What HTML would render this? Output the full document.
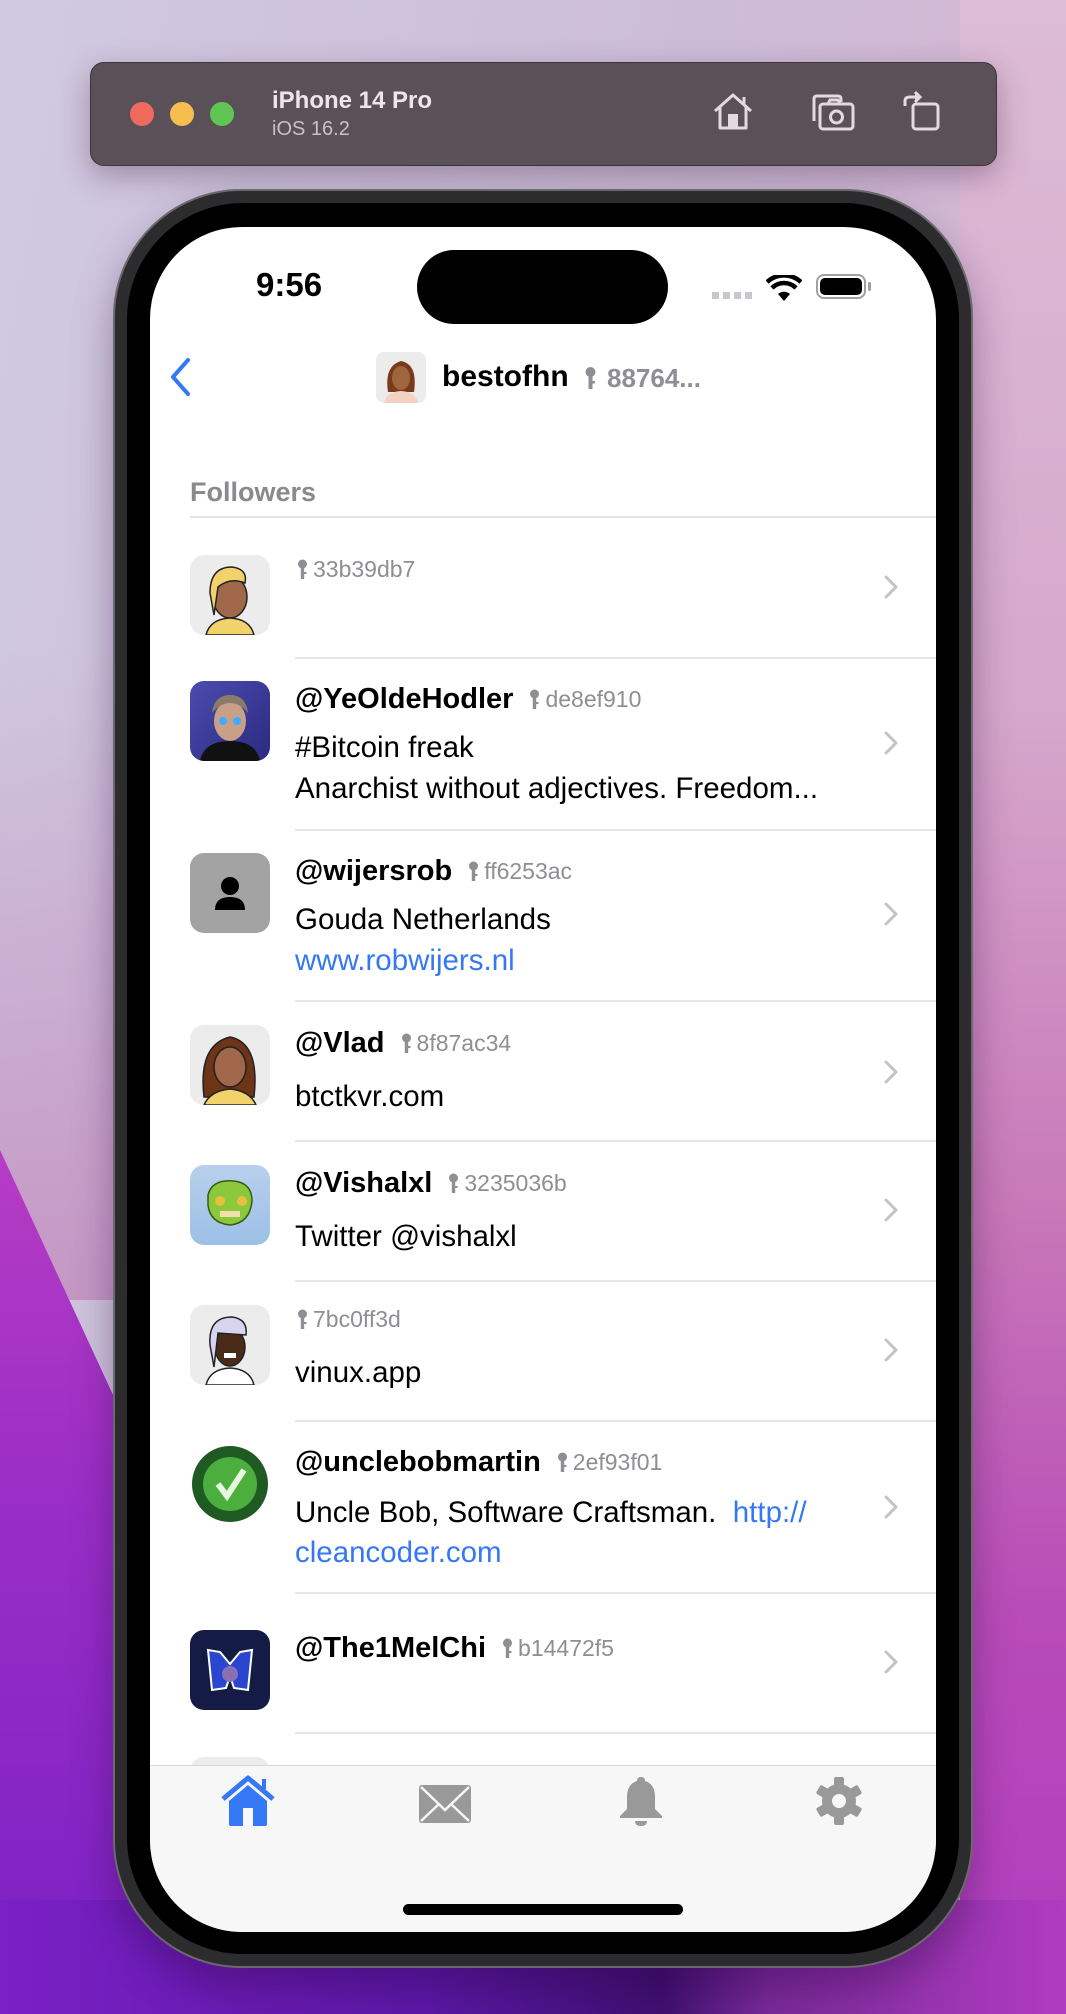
<!DOCTYPE html>
<html><head><meta charset="utf-8">
<style>
*{margin:0;padding:0;box-sizing:border-box}
html,body{width:1066px;height:2014px;overflow:hidden}
body{position:relative;font-family:"Liberation Sans",sans-serif;
background:linear-gradient(100deg,#d0cae0 0%,#cdbcd8 50%,#d8b4cc 100%);}
.abs{position:absolute}
.toolbar{left:90px;top:62px;width:907px;height:104px;border-radius:14px;background:#595058;box-shadow:0 10px 30px rgba(60,30,60,.35);border:1px solid #3c353b}
.dot{position:absolute;top:102px;width:24px;height:24px;border-radius:50%}
.phone{left:113px;top:189px;width:860px;height:1779px;border-radius:128px;background:#2c2c2e;border:2px solid #6a6a6c;box-shadow:0 20px 40px rgba(40,0,60,.35)}
.bezel{left:127px;top:203px;width:832px;height:1751px;border-radius:116px;background:#000}
.screen{left:150px;top:227px;width:786px;height:1705px;border-radius:92px;background:#fff;overflow:hidden}
.t{position:absolute;white-space:nowrap;line-height:40px;height:40px}
.hd{position:absolute;left:145px;height:40px;display:flex;align-items:center;white-space:nowrap}
.name{font-weight:bold;font-size:29px;color:#000;margin-right:16px}
.hash{font-size:23px;color:#8e8e93;margin-left:5px}
.body{font-size:29.5px;color:#000}
.link{font-size:29.5px;color:#3478f6}
.sep{position:absolute;left:145px;width:660px;height:2px;background:#e6e6ea}
.av{position:absolute;left:40px;width:80px;height:80px;border-radius:14px;overflow:hidden}
.chev{position:absolute;left:733px;width:16px;height:26px}
</style></head><body>
<div class="abs" style="left:0;top:0;width:1066px;height:1300px;background:linear-gradient(180deg,rgba(255,255,255,0) 0%,rgba(200,150,190,0) 50%,rgba(190,120,180,.6) 100%)"></div>
<div class="abs" style="left:960px;top:0;width:106px;height:2014px;background:linear-gradient(180deg,#dcbcd6 0%,#d6a8cc 35%,#c878b8 60%,#b84cb8 80%,#b03cc0 100%)"></div>
<div class="abs" style="left:0;top:1150px;width:200px;height:864px;background:linear-gradient(180deg,#b63cc4 0%,#9a2ec6 40%,#7a20c4 100%);clip-path:polygon(0 0,120px 260px,200px 260px,200px 100%,0 100%)"></div>
<div class="abs" style="left:0;top:1900px;width:1066px;height:114px;background:linear-gradient(90deg,#7a20c4 0%,#5c18a8 40%,#3e1070 62%,#7a2a9a 72%,#b03cc0 100%)"></div>

<div class="abs toolbar"></div>
<div class="dot" style="left:130px;background:#ee6a5f"></div>
<div class="dot" style="left:170px;background:#f5be4f"></div>
<div class="dot" style="left:210px;background:#61c554"></div>
<div class="abs" style="left:272px;top:86px;font-size:24px;font-weight:bold;color:#ece6ea;line-height:30px">iPhone 14 Pro</div>
<div class="abs" style="left:272px;top:117px;font-size:20px;color:#c9c1c8;line-height:24px">iOS 16.2</div>
<svg class="abs" style="left:712px;top:92px" width="42" height="38" viewBox="0 0 42 38" fill="none" stroke="#e2dadf" stroke-width="3" stroke-linejoin="round"><path d="M3 19 L21 3 L39 19"/><path d="M32 13 V5"/><path d="M8 15 V36 H34 V15"/><rect x="16" y="22" width="10" height="14" fill="#e2dadf" stroke="none"/></svg>
<svg class="abs" style="left:810px;top:93px" width="46" height="38" viewBox="0 0 46 38" fill="none" stroke="#e2dadf" stroke-width="3"><path d="M4 28 V6 Q4 3 7 3 H28 Q31 3 31 6 V9"/><rect x="10" y="11" width="33" height="25" rx="3"/><circle cx="26.5" cy="24" r="6"/><path d="M18 11 L20 7 H28 L30 11"/></svg>
<svg class="abs" style="left:902px;top:89px" width="40" height="42" viewBox="0 0 40 42" fill="none" stroke="#e2dadf" stroke-width="3"><rect x="11" y="15" width="25" height="25" rx="3"/><path d="M3 17 V12 Q3 8 8 8 H16"/><path d="M13 3 L18 8 L13 13" fill="#e2dadf"/></svg>

<div class="abs phone"></div>
<div class="abs bezel"></div>
<div class="abs screen">
  <div class="abs" style="left:267px;top:23px;width:251px;height:74px;border-radius:37px;background:#000"></div>
  <div class="abs" style="left:106px;top:38px;font-size:33px;font-weight:bold;line-height:40px;color:#000">9:56</div>
  <div class="abs" style="left:562px;top:65px;width:40px;height:7px;background:repeating-linear-gradient(90deg,#c7c7cc 0 7px,transparent 7px 11px)"></div>
  <svg class="abs" style="left:616px;top:48px" width="36" height="26" viewBox="0 0 36 26"><path d="M18 26 L12 19 A9 9 0 0 1 24 19 Z" fill="#000"/><path d="M6 13 A17 17 0 0 1 30 13" stroke="#000" stroke-width="4.5" fill="none"/><path d="M1 7 A25 25 0 0 1 35 7" stroke="#000" stroke-width="4.5" fill="none"/></svg>
  <div class="abs" style="left:666px;top:47px;width:50px;height:25px;border:2.5px solid #a0a0a0;border-radius:8px;padding:2px"><div style="width:100%;height:100%;background:#000;border-radius:5px"></div></div>
  <div class="abs" style="left:718px;top:55px;width:3px;height:9px;background:#a0a0a0;border-radius:2px"></div>

  <svg class="abs" style="left:18px;top:130px" width="24" height="40" viewBox="0 0 24 40"><path d="M20 3 L5 20 L20 37" stroke="#3478f6" stroke-width="4" fill="none" stroke-linecap="round" stroke-linejoin="round"/></svg>
  <div class="abs" style="left:226px;top:125px;width:50px;height:51px;border-radius:8px;background:#ececec;overflow:hidden">
    <svg width="50" height="51" viewBox="0 0 50 51"><path d="M12 40 Q8 14 25 9 Q42 12 38 40 Z" fill="#7a3a1c"/><ellipse cx="25" cy="26" rx="9" ry="12" fill="#a0643f"/><path d="M8 51 Q10 40 25 39 Q40 40 42 51 Z" fill="#f3d2c4"/></svg>
  </div>
  <div class="abs" style="left:292px;top:130px;font-size:30px;font-weight:bold;line-height:40px;color:#000">bestofhn</div>
  <svg class="abs" style="left:434px;top:139px" width="13" height="24" viewBox="0 0 13 24"><circle cx="6.5" cy="6" r="5" fill="#8e8e93"/><rect x="4.5" y="8" width="4" height="15" fill="#8e8e93"/><rect x="8" y="15" width="3" height="2.5" fill="#8e8e93"/></svg>
  <div class="abs" style="left:457px;top:131px;font-size:26px;font-weight:bold;line-height:40px;color:#8e8e93">88764...</div>

  <div class="abs" style="left:40px;top:245px;font-size:27px;line-height:40px;color:#8a8a8e;font-weight:bold">Followers</div>
  <div class="abs" style="left:40px;top:289px;width:746px;height:2px;background:#e3e3e6"></div>

  <!-- row1 -->
  <div class="av" style="top:328px;background:#ececec"><svg width="80" height="80" viewBox="0 0 80 80"><ellipse cx="40" cy="42" rx="17" ry="21" fill="#a0674a" stroke="#222" stroke-width="1.5"/><path d="M20 38 Q20 12 42 12 Q58 14 55 28 Q40 22 28 32 L24 60 Z" fill="#f2d26a" stroke="#222" stroke-width="1.5"/><path d="M16 80 Q20 64 40 63 Q60 64 64 80 Z" fill="#f2d26a" stroke="#222" stroke-width="1.5"/></svg></div>
  <div class="hd" style="top:322px;left:147px"><svg width="11" height="21" viewBox="0 0 11 21"><circle cx="5.5" cy="5" r="4.5" fill="#8e8e93"/><rect x="3.8" y="7" width="3.4" height="13" fill="#8e8e93"/><rect x="7" y="13" width="2.5" height="2" fill="#8e8e93"/></svg><span class="hash">33b39db7</span></div>
  <div class="sep" style="top:430px"></div>

  <!-- row2 -->
  <div class="av" style="top:454px;background:linear-gradient(135deg,#4c4cb0,#2a2a80)"><svg width="80" height="80" viewBox="0 0 80 80"><ellipse cx="40" cy="40" rx="16" ry="20" fill="#c8a088"/><path d="M22 32 Q24 14 40 14 Q56 14 58 32 Q50 22 40 22 Q30 22 22 32Z" fill="#8a7a6a"/><path d="M10 80 Q14 60 40 60 Q66 60 70 80Z" fill="#111"/><circle cx="33" cy="40" r="4" fill="#4af"/><circle cx="47" cy="40" r="4" fill="#4af"/></svg></div>
  <div class="hd" style="top:452px"><span class="name">@YeOldeHodler</span><svg width="11" height="21" viewBox="0 0 11 21"><circle cx="5.5" cy="5" r="4.5" fill="#8e8e93"/><rect x="3.8" y="7" width="3.4" height="13" fill="#8e8e93"/><rect x="7" y="13" width="2.5" height="2" fill="#8e8e93"/></svg><span class="hash">de8ef910</span></div>
  <div class="t body" style="left:145px;top:501px">#Bitcoin freak</div>
  <div class="t body" style="left:145px;top:542px">Anarchist without adjectives. Freedom...</div>
  <div class="sep" style="top:602px"></div>

  <!-- row3 -->
  <div class="av" style="top:626px;background:#a3a3a3"><svg width="80" height="80" viewBox="0 0 80 80"><circle cx="40" cy="33" r="9" fill="#000"/><path d="M25 57 Q25 44 40 44 Q55 44 55 57 Z" fill="#000"/></svg></div>
  <div class="hd" style="top:624px"><span class="name">@wijersrob</span><svg width="11" height="21" viewBox="0 0 11 21"><circle cx="5.5" cy="5" r="4.5" fill="#8e8e93"/><rect x="3.8" y="7" width="3.4" height="13" fill="#8e8e93"/><rect x="7" y="13" width="2.5" height="2" fill="#8e8e93"/></svg><span class="hash">ff6253ac</span></div>
  <div class="t body" style="left:145px;top:673px">Gouda Netherlands</div>
  <div class="t link" style="left:145px;top:714px">www.robwijers.nl</div>
  <div class="sep" style="top:773px"></div>

  <!-- row4 -->
  <div class="av" style="top:798px;background:#ececec"><svg width="80" height="80" viewBox="0 0 80 80"><path d="M14 72 Q8 20 40 12 Q70 18 64 72 Z" fill="#6e3418" stroke="#222" stroke-width="1.5"/><ellipse cx="40" cy="42" rx="16" ry="20" fill="#a0674a" stroke="#222" stroke-width="1.5"/><path d="M14 80 Q20 66 40 64 Q60 66 66 80 Z" fill="#f2d26a" stroke="#222" stroke-width="1.5"/></svg></div>
  <div class="hd" style="top:796px"><span class="name">@Vlad</span><svg width="11" height="21" viewBox="0 0 11 21"><circle cx="5.5" cy="5" r="4.5" fill="#8e8e93"/><rect x="3.8" y="7" width="3.4" height="13" fill="#8e8e93"/><rect x="7" y="13" width="2.5" height="2" fill="#8e8e93"/></svg><span class="hash">8f87ac34</span></div>
  <div class="t body" style="left:145px;top:850px">btctkvr.com</div>
  <div class="sep" style="top:913px"></div>

  <!-- row5 -->
  <div class="av" style="top:938px;background:linear-gradient(180deg,#b8d0ec,#9cc0e6)"><svg width="80" height="80" viewBox="0 0 80 80"><path d="M18 30 Q22 14 44 16 Q62 18 62 36 Q60 58 40 60 Q20 58 18 40Z" fill="#8cc83c" stroke="#3a5a10" stroke-width="1.5"/><circle cx="30" cy="36" r="5" fill="#e8c040"/><circle cx="52" cy="36" r="5" fill="#e8c040"/><rect x="30" y="46" width="20" height="6" fill="#f0e0b0"/></svg></div>
  <div class="hd" style="top:936px"><span class="name">@Vishalxl</span><svg width="11" height="21" viewBox="0 0 11 21"><circle cx="5.5" cy="5" r="4.5" fill="#8e8e93"/><rect x="3.8" y="7" width="3.4" height="13" fill="#8e8e93"/><rect x="7" y="13" width="2.5" height="2" fill="#8e8e93"/></svg><span class="hash">3235036b</span></div>
  <div class="t body" style="left:145px;top:990px">Twitter @vishalxl</div>
  <div class="sep" style="top:1053px"></div>

  <!-- row6 -->
  <div class="av" style="top:1078px;background:#ececec"><svg width="80" height="80" viewBox="0 0 80 80"><ellipse cx="40" cy="42" rx="15" ry="19" fill="#4a2a18" stroke="#222" stroke-width="1.5"/><path d="M20 40 Q18 12 42 12 Q58 14 56 30 L28 28 L24 62Z" fill="#d8d4f0" stroke="#222" stroke-width="1.5"/><rect x="34" y="48" width="12" height="5" fill="#fff"/><path d="M16 80 Q20 64 40 63 Q60 64 64 80 Z" fill="#fff" stroke="#222" stroke-width="1.5"/></svg></div>
  <div class="hd" style="top:1072px;left:147px"><svg width="11" height="21" viewBox="0 0 11 21"><circle cx="5.5" cy="5" r="4.5" fill="#8e8e93"/><rect x="3.8" y="7" width="3.4" height="13" fill="#8e8e93"/><rect x="7" y="13" width="2.5" height="2" fill="#8e8e93"/></svg><span class="hash">7bc0ff3d</span></div>
  <div class="t body" style="left:145px;top:1126px">vinux.app</div>
  <div class="sep" style="top:1193px"></div>

  <!-- row7 -->
  <div class="av" style="top:1217px;background:#fff"><svg width="80" height="80" viewBox="0 0 80 80"><circle cx="40" cy="40" r="38" fill="#1e5a22"/><circle cx="40" cy="40" r="27" fill="#4cae3c"/><path d="M28 40 L37 52 L54 26" stroke="#e8f8e0" stroke-width="6" fill="none"/></svg></div>
  <div class="hd" style="top:1215px"><span class="name">@unclebobmartin</span><svg width="11" height="21" viewBox="0 0 11 21"><circle cx="5.5" cy="5" r="4.5" fill="#8e8e93"/><rect x="3.8" y="7" width="3.4" height="13" fill="#8e8e93"/><rect x="7" y="13" width="2.5" height="2" fill="#8e8e93"/></svg><span class="hash">2ef93f01</span></div>
  <div class="t body" style="left:145px;top:1266px">Uncle Bob, Software Craftsman.&nbsp; <span style="color:#3478f6">http://</span></div>
  <div class="t link" style="left:145px;top:1306px">cleancoder.com</div>
  <div class="sep" style="top:1365px"></div>

  <!-- row8 -->
  <div class="av" style="top:1403px;background:#141c46"><svg width="80" height="80" viewBox="0 0 80 80"><path d="M18 20 L30 22 L40 34 L50 22 L62 20 L58 60 L44 58 L40 46 L36 58 L22 60 Z" fill="#2a46d0" stroke="#fff" stroke-width="2"/><circle cx="40" cy="44" r="8" fill="#8a70b0"/></svg></div>
  <div class="hd" style="top:1401px"><span class="name">@The1MelChi</span><svg width="11" height="21" viewBox="0 0 11 21"><circle cx="5.5" cy="5" r="4.5" fill="#8e8e93"/><rect x="3.8" y="7" width="3.4" height="13" fill="#8e8e93"/><rect x="7" y="13" width="2.5" height="2" fill="#8e8e93"/></svg><span class="hash">b14472f5</span></div>
  <div class="sep" style="top:1505px"></div>
  <div class="av" style="top:1530px;background:#ececec"></div>

  <!-- chevrons -->
  <svg class="chev" style="top:347px" viewBox="0 0 16 26"><path d="M3 3 L13 13 L3 23" stroke="#c4c4c7" stroke-width="3" fill="none" stroke-linecap="round" stroke-linejoin="round"/></svg>
  <svg class="chev" style="top:503px" viewBox="0 0 16 26"><path d="M3 3 L13 13 L3 23" stroke="#c4c4c7" stroke-width="3" fill="none" stroke-linecap="round" stroke-linejoin="round"/></svg>
  <svg class="chev" style="top:674px" viewBox="0 0 16 26"><path d="M3 3 L13 13 L3 23" stroke="#c4c4c7" stroke-width="3" fill="none" stroke-linecap="round" stroke-linejoin="round"/></svg>
  <svg class="chev" style="top:832px" viewBox="0 0 16 26"><path d="M3 3 L13 13 L3 23" stroke="#c4c4c7" stroke-width="3" fill="none" stroke-linecap="round" stroke-linejoin="round"/></svg>
  <svg class="chev" style="top:970px" viewBox="0 0 16 26"><path d="M3 3 L13 13 L3 23" stroke="#c4c4c7" stroke-width="3" fill="none" stroke-linecap="round" stroke-linejoin="round"/></svg>
  <svg class="chev" style="top:1110px" viewBox="0 0 16 26"><path d="M3 3 L13 13 L3 23" stroke="#c4c4c7" stroke-width="3" fill="none" stroke-linecap="round" stroke-linejoin="round"/></svg>
  <svg class="chev" style="top:1267px" viewBox="0 0 16 26"><path d="M3 3 L13 13 L3 23" stroke="#c4c4c7" stroke-width="3" fill="none" stroke-linecap="round" stroke-linejoin="round"/></svg>
  <svg class="chev" style="top:1422px" viewBox="0 0 16 26"><path d="M3 3 L13 13 L3 23" stroke="#c4c4c7" stroke-width="3" fill="none" stroke-linecap="round" stroke-linejoin="round"/></svg>

  <!-- tab bar -->
  <div class="abs" style="left:0;top:1538px;width:786px;height:170px;background:#f7f7f7;border-top:1.5px solid #d6d6d8"></div>
  <svg class="abs" style="left:70px;top:1548px" width="56" height="52" viewBox="0 0 56 52"><path d="M3 24 L28 3 L53 24" stroke="#3478f6" stroke-width="5" fill="none" stroke-linejoin="round"/><path d="M44 14 V4" stroke="#3478f6" stroke-width="4"/><path d="M9 26 L28 10 L47 26 V49 Q47 51 45 51 H11 Q9 51 9 49 Z" fill="#3478f6"/><rect x="23" y="33" width="10" height="18" fill="#f7f7f7"/></svg>
  <svg class="abs" style="left:268px;top:1557px" width="54" height="40" viewBox="0 0 54 40"><rect x="1" y="1" width="52" height="38" rx="3" fill="#999"/><path d="M3 3 L27 26 L51 3 M3 37 L21 20 M51 37 L33 20" stroke="#f7f7f7" stroke-width="2.5" fill="none"/></svg>
  <svg class="abs" style="left:468px;top:1548px" width="46" height="52" viewBox="0 0 46 52"><path d="M23 2 Q27 2 27 6 Q37 9 37 22 V34 L44 41 V43 H2 V41 L9 34 V22 Q9 9 19 6 Q19 2 23 2Z" fill="#999"/><path d="M17 46 H29 Q29 51 23 51 Q17 51 17 46Z" fill="#999"/></svg>
  <svg class="abs" style="left:664px;top:1549px" width="50" height="50" viewBox="0 0 50 50"><g fill="#999"><circle cx="25" cy="25" r="17"/><rect x="20" y="1" width="10" height="48" rx="2"/><rect x="20" y="1" width="10" height="48" rx="2" transform="rotate(60 25 25)"/><rect x="20" y="1" width="10" height="48" rx="2" transform="rotate(120 25 25)"/></g><circle cx="25" cy="25" r="7" fill="#f7f7f7"/></svg>
  <div class="abs" style="left:253px;top:1677px;width:280px;height:11px;border-radius:6px;background:#000"></div>
</div>
</body></html>
